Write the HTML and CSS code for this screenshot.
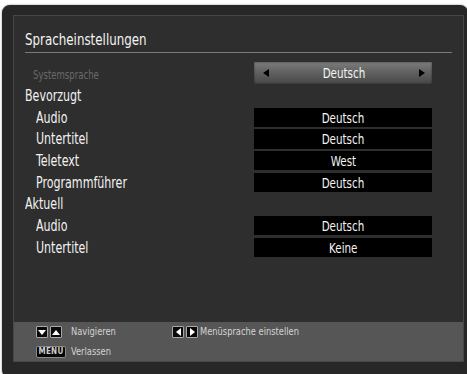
FILE: index.html
```
<!DOCTYPE html>
<html lang="de">
<head>
<meta charset="utf-8">
<title>Spracheinstellungen</title>
<link rel="stylesheet" href="styles.css">
</head>
<body>
<div class="frame">
  <div class="panel">
    <div class="content">
      <div class="title"><span class="sq">Spracheinstellungen</span></div>
      <div class="rows">
        <div class="row row-sel">
          <div class="label dim"><span class="sq">Systemsprache</span></div>
          <div class="selector">
            <span class="tri tri-left"></span>
            <span class="sel-text sq sqc">Deutsch</span>
            <span class="tri tri-right"></span>
          </div>
        </div>
        <div class="row"><div class="label head"><span class="sq">Bevorzugt</span></div></div>
        <div class="row"><div class="label sub"><span class="sq">Audio</span></div><div class="value"><span class="sq sqc">Deutsch</span></div></div>
        <div class="row"><div class="label sub"><span class="sq">Untertitel</span></div><div class="value"><span class="sq sqc">Deutsch</span></div></div>
        <div class="row"><div class="label sub"><span class="sq">Teletext</span></div><div class="value"><span class="sq sqc">West</span></div></div>
        <div class="row"><div class="label sub"><span class="sq">Programmführer</span></div><div class="value"><span class="sq sqc">Deutsch</span></div></div>
        <div class="row"><div class="label head"><span class="sq">Aktuell</span></div></div>
        <div class="row"><div class="label sub"><span class="sq">Audio</span></div><div class="value"><span class="sq sqc">Deutsch</span></div></div>
        <div class="row"><div class="label sub"><span class="sq">Untertitel</span></div><div class="value"><span class="sq sqc">Keine</span></div></div>
      </div>
    </div>
    <div class="footer">
      <div class="keys"><span class="key"><span class="ktri kdown"></span></span><span class="key"><span class="ktri kup"></span></span></div>
      <div class="ftext"><span class="sq">Navigieren</span></div>
      <div class="keys"><span class="key"><span class="ktri kleft"></span></span><span class="key"><span class="ktri kright"></span></span></div>
      <div class="ftext"><span class="sq">Menüsprache einstellen</span></div>
      <div class="keys"><span class="menu">MENU</span></div>
      <div class="ftext"><span class="sq">Verlassen</span></div>
    </div>
  </div>
</div>
</body>
</html>
```
FILE: styles.css
```
html, body {
  margin: 0;
  padding: 0;
  background: #ffffff;
}
body {
  font-family: "DejaVu Sans Condensed", "Liberation Sans", sans-serif;
  color: #f2f2f2;
}
.sq {
  display: inline-block;
  transform: scaleX(0.82);
  transform-origin: left center;
  white-space: nowrap;
}
.sqc {
  transform-origin: center center;
}
.frame {
  margin: 5px 3px 0 2px;
  width: 451px;
  height: 355px;
  padding: 10px 4px 8px 11px;
  background: #272727;
  border-radius: 8px;
  box-shadow: 0 0 2px rgba(0,0,0,0.5);
}
.panel {
  height: 345px;
  border: 1px solid #474747;
  background: #2e2e2e;
  display: flex;
  flex-direction: column;
}
.content {
  flex: 1;
  padding: 0 11px 0 11px;
}
.title {
  margin-top: 13px;
  height: 22px;
  line-height: 22px;
  font-size: 16.5px;
  color: #f4f4f4;
  border-bottom: 1px solid #7a7a7a;
  padding-bottom: 1px;
}
.title .sq {
  transform: scaleX(0.8);
}
.rows {
  margin-top: 9px;
  display: flex;
  flex-direction: column;
}
.row {
  display: grid;
  grid-template-columns: 229px 178px;
  height: 21.67px;
  align-items: start;
}
.row-sel {
  height: 22px;
  margin-bottom: 2px;
}
.label {
  height: 19.5px;
  line-height: 21px;
  font-size: 15px;
  white-space: nowrap;
}
.row-sel .label {
  height: 22px;
  line-height: 25px;
}
.dim {
  color: #6a6a6a;
  font-size: 12.5px;
  padding-left: 8px;
}
.dim .sq {
  transform: scaleX(0.76);
}
.head {
  padding-left: 0;
}
.sub {
  padding-left: 11px;
}
.value {
  grid-column: 2;
  height: 19.5px;
  line-height: 21px;
  background: #000;
  text-align: center;
  font-size: 14px;
  color: #f4f4f4;
}
.selector {
  height: 22px;
  display: flex;
  align-items: center;
  justify-content: space-between;
  padding: 0 7px 0 9px;
  background: linear-gradient(#7c7c7c, #626262 45%, #474747);
  box-shadow: inset 0 0 2px rgba(0,0,0,0.6);
  font-size: 14px;
  color: #f4f4f4;
}
.sel-text {
  line-height: 22px;
}
.tri {
  width: 0;
  height: 0;
  border-top: 4px solid transparent;
  border-bottom: 4px solid transparent;
}
.tri-left {
  border-right: 6px solid #000;
}
.tri-right {
  border-left: 6px solid #000;
}
.footer {
  height: 39px;
  background: #565656;
  display: grid;
  grid-template-columns: 35px 101px 28px 1fr;
  grid-template-rows: 20px 19px;
  padding-left: 22px;
  align-items: center;
  font-size: 11px;
  color: #d4d4d4;
}
.footer .ftext {
  white-space: nowrap;
  line-height: 14px;
}
.footer .sq {
  transform: scaleX(0.84);
}
.keys {
  display: flex;
  gap: 2px;
  align-items: center;
}
.key {
  width: 10px;
  height: 10px;
  background: #0a0a0a;
  border: 1px solid #a8a8a8;
  border-radius: 1px;
  display: flex;
  align-items: center;
  justify-content: center;
}
.ktri {
  width: 0;
  height: 0;
}
.kdown {
  border-left: 4px solid transparent;
  border-right: 4px solid transparent;
  border-top: 5px solid #fff;
}
.kup {
  border-left: 4px solid transparent;
  border-right: 4px solid transparent;
  border-bottom: 5px solid #fff;
}
.kleft {
  border-top: 4px solid transparent;
  border-bottom: 4px solid transparent;
  border-right: 5px solid #fff;
}
.kright {
  border-top: 4px solid transparent;
  border-bottom: 4px solid transparent;
  border-left: 5px solid #fff;
}
.menu {
  display: inline-block;
  width: 28px;
  height: 10px;
  line-height: 10px;
  background: #050505;
  border: 1px solid #8a8a8a;
  border-radius: 2px;
  font-size: 8px;
  font-weight: bold;
  text-align: center;
  color: #cfcfcf;
  letter-spacing: 0.3px;
}
```
